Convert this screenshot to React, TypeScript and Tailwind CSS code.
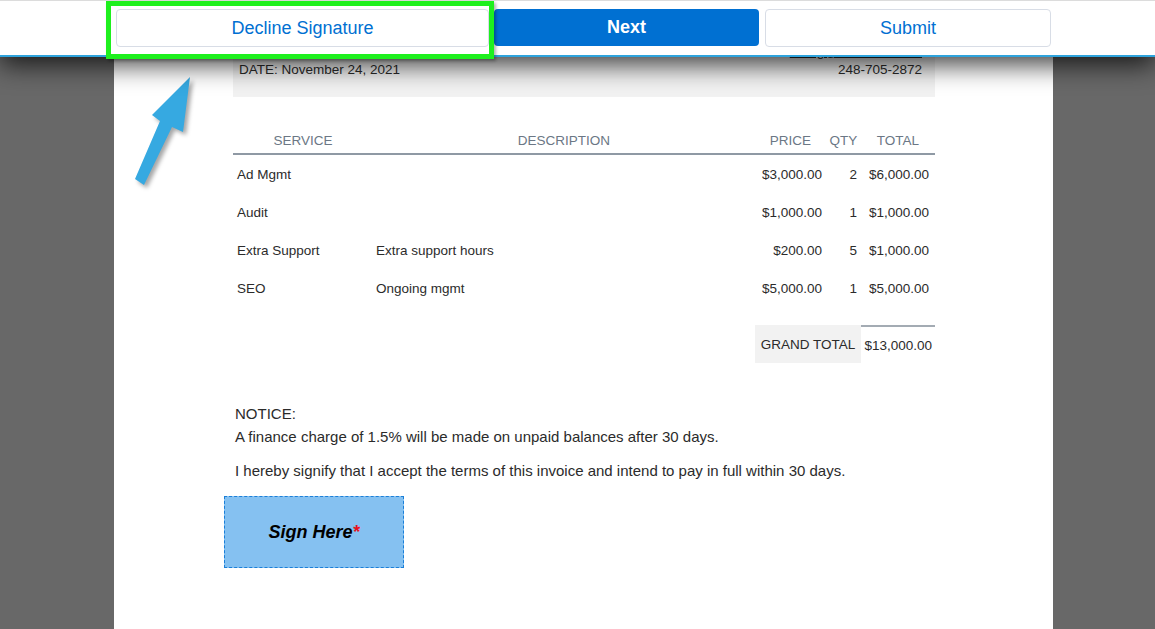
import React from 'react';

interface LineItem {
  service: string;
  description: string;
  price: string;
  qty: number;
  total: string;
}

const items: LineItem[] = [
  { service: 'Ad Mgmt', description: '', price: '$3,000.00', qty: 2, total: '$6,000.00' },
  { service: 'Audit', description: '', price: '$1,000.00', qty: 1, total: '$1,000.00' },
  { service: 'Extra Support', description: 'Extra support hours', price: '$200.00', qty: 5, total: '$1,000.00' },
  { service: 'SEO', description: 'Ongoing mgmt', price: '$5,000.00', qty: 1, total: '$5,000.00' },
];

const Arrow = () => (
  <svg
    className="absolute left-0 top-0 z-10 pointer-events-none drop-shadow-[3px_3px_2px_rgba(0,0,0,0.35)]"
    width="220"
    height="200"
    viewBox="0 0 220 200"
  >
    <polygon points="190,77 183,132 172,127 144,185 135,179 160,121 152,115" fill="#36a9e1" />
  </svg>
);

const Toolbar = () => (
  <header className="fixed inset-x-0 top-0 z-20 h-[57px] bg-white border-t border-[#dcdcdc] border-b-2 border-b-[#2ea3dc] shadow-[0_8px_26px_rgba(0,0,0,0.75)]">
    <div className="flex items-start gap-[5px] pt-[8px] pl-[116px] text-[18px]">
      <div className="relative">
        <div className="absolute -left-[10px] -right-[5px] -top-[8px] -bottom-[12px] border-[5px] border-[#1ef01e] shadow-[2px_2px_3px_rgba(0,0,0,0.3)]" />
        <button className="relative w-[373px] h-[38px] rounded-[4px] border border-[#d8dde6] bg-white text-[#0070d2]">
          Decline Signature
        </button>
      </div>
      <button className="w-[265px] h-[37px] rounded-[4px] bg-[#0070d2] font-bold text-white">
        Next
      </button>
      <button className="ml-px w-[286px] h-[38px] rounded-[4px] border border-[#d8dde6] bg-white text-[#0070d2]">
        Submit
      </button>
    </div>
  </header>
);

export default function App() {
  return (
    <div className="relative min-h-screen bg-[#686868] font-['Liberation_Sans',Arial,sans-serif] text-[#2b2b2b]">
      <Toolbar />
      <Arrow />
      <div className="ml-[114px] w-[939px] min-h-screen bg-white pt-[20px]">
        <div className="ml-[119px] w-[702px]">
          <div className="flex h-[77px] flex-col justify-end bg-[#f2f2f2] pl-[6px] pr-[13px] pb-[19px] text-[13.5px] leading-[16px]">
            <div className="flex items-end justify-between">
              <div>DATE: November 24, 2021</div>
              <div className="text-right">
                <div className="mb-[2px] underline">billing@acmeads.com</div>
                <div>248-705-2872</div>
              </div>
            </div>
          </div>

          <table className="mt-[28px] w-[702px] table-fixed border-separate border-spacing-0 text-[13.5px] leading-[16px]">
            <colgroup>
              <col className="w-[140px]" />
              <col className="w-[382px]" />
              <col className="w-[71px]" />
              <col className="w-[35px]" />
              <col className="w-[74px]" />
            </colgroup>
            <thead>
              <tr className="text-[#6b7785]">
                <th className="pt-[8px] pb-[4px] font-normal text-center border-b-2 border-[#8f99a4]">SERVICE</th>
                <th className="pt-[8px] pb-[4px] font-normal text-center border-b-2 border-[#8f99a4]">DESCRIPTION</th>
                <th className="pt-[8px] pb-[4px] font-normal text-center border-b-2 border-[#8f99a4]">PRICE</th>
                <th className="pt-[8px] pb-[4px] font-normal text-center border-b-2 border-[#8f99a4]">QTY</th>
                <th className="pt-[8px] pb-[4px] font-normal text-center border-b-2 border-[#8f99a4]">TOTAL</th>
              </tr>
            </thead>
            <tbody>
              {items.map((item) => (
                <tr key={item.service} className="h-[38px]">
                  <td className="pl-[4px] pt-[1px] align-middle">{item.service}</td>
                  <td className="pl-[3px] pt-[1px] align-middle">{item.description}</td>
                  <td className="pr-[4px] pt-[1px] text-right align-middle">{item.price}</td>
                  <td className="pr-[4px] pt-[1px] text-right align-middle">{item.qty}</td>
                  <td className="pr-[6px] pt-[1px] text-right align-middle">{item.total}</td>
                </tr>
              ))}
              <tr className="h-[18px]">
                <td colSpan={5} />
              </tr>
              <tr className="h-[38px]">
                <td colSpan={2} />
                <td colSpan={2} className="bg-[#f2f2f2] pt-[2px] text-center align-middle whitespace-nowrap">
                  GRAND TOTAL
                </td>
                <td className="border-t-2 border-[#a3abb3] pt-[1px] pr-[3px] text-right align-middle">$13,000.00</td>
              </tr>
            </tbody>
          </table>

          <div className="mt-[39px] pl-[2px] text-[15px] leading-[23px]">
            <p>NOTICE:</p>
            <p>A finance charge of 1.5% will be made on unpaid balances after 30 days.</p>
            <p className="mt-[11px]">
              I hereby signify that I accept the terms of this invoice and intend to pay in full within 30 days.
            </p>
          </div>

          <div className="mt-[14px] -ml-[9px] flex h-[72px] w-[180px] items-center justify-center border border-dashed border-[#1b7fd8] bg-[#85c1f1]">
            <span className="text-[18px] font-bold italic text-black">
              Sign Here<span className="text-[#e8131b]">*</span>
            </span>
          </div>
        </div>
      </div>
    </div>
  );
}
